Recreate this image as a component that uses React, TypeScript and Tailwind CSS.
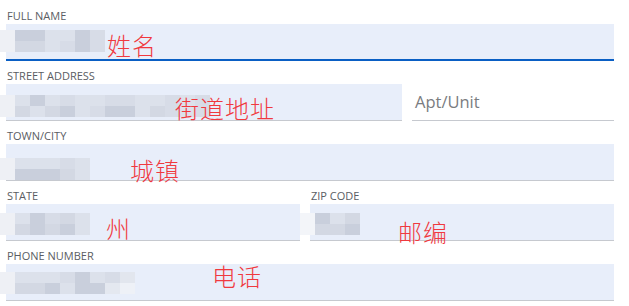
type FieldProps = {
  label: string
  focused?: boolean
  className?: string
  children?: React.ReactNode
}

const Field = ({ label, focused, className, children }: FieldProps) => (
  <div className={`flex flex-col ${className ?? ''}`}>
    <div className="h-[23px] flex items-end pb-[3px] pl-px text-[11px] leading-none text-[#5a5d63]">
      {label}
    </div>
    <div
      className={`relative h-[37px] bg-[#e8eefa] ${
        focused ? 'border-b-2 border-[#0a5fc4]' : 'border-b border-[#c6c9cf]'
      }`}
    >
      {children}
    </div>
  </div>
)

// pixelated redaction blocks
const Blur = ({ x, y, w, rows }: { x: number; y: number; w: number; rows: string[][] }) => (
  <div className="absolute flex flex-col" style={{ left: x, top: y }}>
    {rows.map((row, i) => (
      <div key={i} className="flex">
        {row.map((c, j) => (
          <div key={j} className="h-[11px]" style={{ width: w, background: c }} />
        ))}
      </div>
    ))}
  </div>
)

const Note = ({ x, y, text }: { x: number; y: number; text: string }) => (
  <div
    className="absolute text-[24px] leading-none text-[#f0393f] tracking-[1px]"
    style={{ left: x, top: y, fontFamily: '"Noto Sans CJK SC", sans-serif', fontWeight: 300 }}
  >
    {text}
  </div>
)

const A = '#eef0f5'
const B = '#d3d8e3'
const C = '#c9cfdc'
const D = '#dce1eb'
const E = '#d7dce7'

export default function App() {
  return (
    <div
      className="relative w-[629px] h-[306px] bg-white overflow-hidden"
      style={{ fontFamily: '"Open Sans", "Noto Sans", sans-serif' }}
    >
      <div className="flex flex-col pt-px pl-[6px] w-[614px]">
        <Field label="FULL NAME" focused />
        <div className="flex gap-[10px]">
          <Field label="STREET ADDRESS" className="w-[396px]" />
          <div className="flex flex-col w-[202px]">
            <div className="h-[23px]" />
            <div className="h-[37px] border-b border-[#c6c9cf] flex items-center pl-[3px] pt-[1px] text-[16.5px] text-[#7a7c80]">
              Apt/Unit
            </div>
          </div>
        </div>
        <Field label="TOWN/CITY" />
        <div className="flex gap-[10px]">
          <Field label="STATE" className="w-[294px]" />
          <Field label="ZIP CODE" className="w-[304px]" />
        </div>
        <Field label="PHONE NUMBER" />
      </div>

      <Blur x={0} y={30} w={15} rows={[[A, C, C, D, D, C, E], [A, B, B, D, E, C, E]]} />
      <Blur x={0} y={95} w={15} rows={[[A, D, C, D, E, D, D, E, E, D, D, E, D, E], [A, B, D, B, C, D, E, C, C, D, B, E, D, E]]} />
      <Blur x={0} y={158} w={15} rows={[[A, D, D, D, E, D], [A, C, C, C, B, D]]} />
      <Blur x={0} y={213} w={15} rows={[[A, D, C, E, B, D], [A, B, C, B, C, D]]} />
      <Blur x={300} y={213} w={15} rows={[['#f3f5f9', C, D, B], ['#f3f5f9', B, B, C]]} />
      <Blur x={0} y={272} w={15} rows={[[A, D, D, D, E, C, D, E, '#e2e6ee'], [A, B, B, C, D, C, C, '#e4e8f0', '#eef1f7']]} />

      <Note x={107} y={33} text="姓名" />
      <Note x={175} y={96} text="街道地址" />
      <Note x={130} y={158} text="城镇" />
      <Note x={106} y={216} text="州" />
      <Note x={398} y={220} text="邮编" />
      <Note x={212} y={264} text="电话" />
    </div>
  )
}
